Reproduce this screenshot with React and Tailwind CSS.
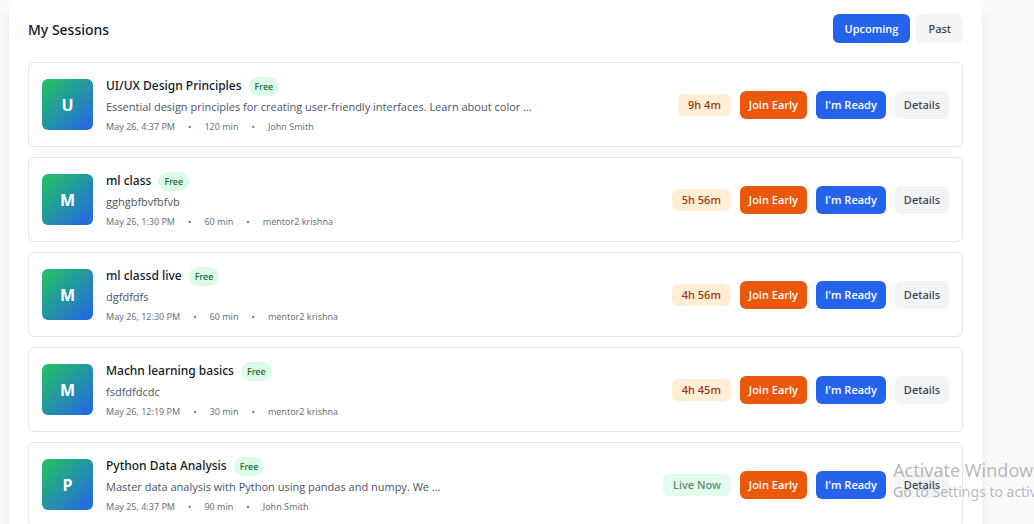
import { useState } from "react";

const sessions = [
  { id: 1, title: "UI/UX Design Principles", description: "Essential design principles for creating user-friendly interfaces. Learn about color ...", date: "May 26, 4:37 PM", duration: "120 min", mentor: "John Smith", status: "9h 4m" },
  { id: 2, title: "ml class", description: "gghgbfbvfbfvb", date: "May 26, 1:30 PM", duration: "60 min", mentor: "mentor2 krishna", status: "5h 56m" },
  { id: 3, title: "ml classd live", description: "dgfdfdfs", date: "May 26, 12:30 PM", duration: "60 min", mentor: "mentor2 krishna", status: "4h 56m" },
  { id: 4, title: "Machn learning basics", description: "fsdfdfdcdc", date: "May 26, 12:19 PM", duration: "30 min", mentor: "mentor2 krishna", status: "4h 45m" },
  { id: 5, title: "Python Data Analysis", description: "Master data analysis with Python using pandas and numpy. We ...", date: "May 25, 4:37 PM", duration: "90 min", mentor: "John Smith", status: "Live Now", live: true },
];

function TabButton({ active, onClick, children }) {
  return (
    <button
      type="button"
      aria-pressed={active}
      onClick={onClick}
      className={`rounded-md px-3 py-1.5 text-[11px] leading-[17px] ${
        active
          ? "bg-[#2563eb] font-['Open_Sans',sans-serif] font-semibold text-white"
          : "bg-[#f3f4f6] font-medium text-[#374151]"
      }`}
    >
      {children}
    </button>
  );
}

function SessionCard({ session }) {
  const action = "rounded-md px-[9px] py-1.5 text-[11px] leading-4 whitespace-nowrap";
  const solid = "font-['Open_Sans',sans-serif] font-semibold text-white";
  return (
    <li className="flex items-center justify-between gap-4 rounded-md border border-[#e5e7eb] px-[13px] py-3">
      <div className="flex min-w-0 items-center gap-[13px]">
        <div className="flex size-[51px] shrink-0 items-center justify-center rounded-md bg-linear-to-br/srgb from-[#22c55e] to-[#2563eb] text-base font-bold text-white">
          {session.title[0].toUpperCase()}
        </div>
        <div className="min-w-0">
          <div className="flex items-center gap-[7px]">
            <h3 className="truncate text-xs leading-[22px] font-medium text-[#111827]">{session.title}</h3>
            <span className="rounded-full bg-[#dcfce7] px-1.5 text-[9px] leading-[19px] font-medium text-[#166534]">Free</span>
          </div>
          <p className="mt-0.5 truncate font-['Open_Sans',sans-serif] text-[11px] leading-4 text-[#4b5563]">{session.description}</p>
          <div className="mt-[5px] flex items-center gap-[13px] text-[9px] leading-[14px] whitespace-nowrap text-[#6b7280]">
            <span>{session.date}</span>
            <span>•</span>
            <span>{session.duration}</span>
            <span>•</span>
            <span>{session.mentor}</span>
          </div>
        </div>
      </div>
      <div className="flex shrink-0 items-center gap-[9px]">
        <span
          className={`rounded-md px-2.5 py-[3px] text-[11px] leading-4 font-medium whitespace-nowrap ${
            session.live ? "bg-[#dcfce7] text-[#166534] opacity-75" : "bg-[#ffedd5] text-[#9a3412]"
          }`}
        >
          {session.status}
        </span>
        <button type="button" className={`${action} ${solid} bg-[#ea580c]`}>Join Early</button>
        <button type="button" className={`${action} ${solid} bg-[#2563eb]`}>I'm Ready</button>
        <button type="button" className={`${action} bg-[#f3f4f6] font-medium text-[#374151]`}>Details</button>
      </div>
    </li>
  );
}

export default function App() {
  const [tab, setTab] = useState("upcoming");
  return (
    <div className="relative h-screen overflow-hidden bg-[#f9fafb] pr-[52px] pl-[9px] font-['Noto_Sans','Open_Sans',sans-serif]">
      <main className="rounded-md bg-white px-[19px] pt-3.5 pb-5 shadow-lg">
        <header className="mb-[19px] flex items-center justify-between">
          <h1 className="pt-0.5 text-sm font-medium text-[#111827]">My Sessions</h1>
          <div className="flex gap-1.5">
            <TabButton active={tab === "upcoming"} onClick={() => setTab("upcoming")}>Upcoming</TabButton>
            <TabButton active={tab === "past"} onClick={() => setTab("past")}>Past</TabButton>
          </div>
        </header>
        <ul className="flex flex-col gap-2.5">
          {sessions.map((session) => (
            <SessionCard key={session.id} session={session} />
          ))}
        </ul>
      </main>
      <div className="pointer-events-none absolute top-[458px] left-[893px] whitespace-nowrap text-[#8a8a8a]/60">
        <p className="text-lg leading-6">Activate Windows</p>
        <p className="text-sm leading-5">Go to Settings to activate Windows.</p>
      </div>
    </div>
  );
}
